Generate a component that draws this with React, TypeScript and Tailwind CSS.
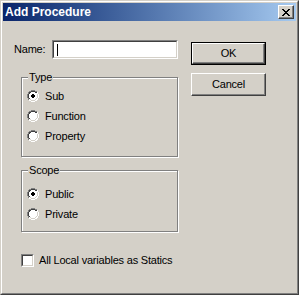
import React from "react";

function Radio({ checked }: { checked?: boolean }) {
  return (
    <svg width="12" height="12" viewBox="0 0 12 12" className="shrink-0">
      <path d="M4 0h4v1h2v1h1v2h1v4h-1v2h-1v1h-2v1h-4v-1h-2v-1h-1v-2h-1v-4h1v-2h1v-1h2z" fill="#fff" />
      <path d="M4 0h4v1h-4zM2 1h2v1h-2zM8 1h2v1h-2zM1 2h1v2h-1zM0 4h1v4h-1zM1 8h1v2h-1z" fill="#808080" />
      <path d="M4 1h4v1h-4zM2 2h2v1h-2zM8 2h2v1h-2zM1 4h1v4h-1zM2 3h1v1h-1zM2 8h1v1h-1z" fill="#404040" />
      <path d="M10 2h1v2h-1zM11 4h1v4h-1zM10 8h1v2h-1zM8 10h2v1h-2zM2 10h2v1h-2zM4 11h4v1h-4z" fill="#ffffff" />
      <path d="M10 4h1v4h-1zM9 8h1v1h-1zM8 9h1v1h-1zM4 10h4v1h-4zM3 9h1v1h-1z" fill="#d4d0c8" />
      {checked && <path d="M5 4h2v1h1v2h-1v1h-2v-1h-1v-2h1z" fill="#000" />}
    </svg>
  );
}

function GroupBox({
  label,
  className,
  children,
}: {
  label: string;
  className: string;
  children: React.ReactNode;
}) {
  return (
    <div
      className={`relative border border-[#808080] shadow-[1px_1px_0_#fff,inset_1px_1px_0_#fff] ${className}`}
    >
      <span className="absolute -top-[8px] left-[6px] bg-[#d4d0c8] px-[1px] leading-[14px]">
        {label}
      </span>
      {children}
    </div>
  );
}

function RadioRow({ label, checked }: { label: string; checked?: boolean }) {
  return (
    <div className="flex h-[20px] items-center gap-[6px] whitespace-nowrap">
      <Radio checked={checked} />
      <span>{label}</span>
    </div>
  );
}

function Button({ children, isDefault }: { children: React.ReactNode; isDefault?: boolean }) {
  const inner = (
    <div
      className={`flex items-center justify-center border border-t-white border-l-white border-b-[#404040] border-r-[#404040] shadow-[inset_-1px_-1px_0_#808080] ${
        isDefault ? "h-[21px] w-[73px]" : "h-[23px] w-[75px]"
      }`}
    >
      {children}
    </div>
  );
  if (isDefault) {
    return <div className="border border-black">{inner}</div>;
  }
  return inner;
}

export default function App() {
  return (
    <div className="h-[295px] w-[299px] border border-t-[#d4d0c8] border-l-[#d4d0c8] border-b-[#404040] border-r-[#404040] bg-[#d4d0c8] font-['Liberation_Sans',Arial,sans-serif] text-[11px] tracking-[-0.2px] text-black">
      <div className="flex h-full flex-col border border-t-white border-l-white border-b-[#808080] border-r-[#808080] p-px">
        {/* Title bar */}
        <div className="flex h-[18px] shrink-0 items-center justify-between bg-gradient-to-r from-[#0a246a] to-[#a6caf0] pl-[2px] pr-[2px]">
          <span className="text-[12px] font-bold leading-none tracking-normal text-white">Add Procedure</span>
          <div className="flex h-[14px] w-[16px] items-center justify-center border border-t-white border-l-white border-b-[#404040] border-r-[#404040] bg-[#d4d0c8] shadow-[inset_-1px_-1px_0_#808080]">
            <svg width="8" height="7" viewBox="0 0 8 7">
              <path d="M0 0h2v1h1v1h2v-1h1v-1h2v1h-1v1h-1v1h-1v1h1v1h1v1h1v1h-2v-1h-1v-1h-2v1h-1v1h-2v-1h1v-1h1v-1h1v-1h-1v-1h-1v-1h-1z" fill="#000" />
            </svg>
          </div>
        </div>

        {/* Body */}
        <div className="flex flex-1 gap-[13px] pl-[11px] pt-[19px]">
          <div className="flex w-[164px] shrink-0 flex-col">
            <div className="flex h-[19px] items-center">
              <span className="w-[38px]">Name:</span>
              <div className="relative h-[19px] w-[126px] border border-t-[#808080] border-l-[#808080] border-b-white border-r-white">
                <div className="flex h-full items-center border border-t-[#404040] border-l-[#404040] border-b-[#d4d0c8] border-r-[#d4d0c8] bg-white pl-[3px]">
                  <span className="block h-[12px] w-px bg-black" />
                </div>
              </div>
            </div>

            <GroupBox label="Type" className="ml-[7px] mt-[18px] h-[80px] w-[157px] pl-[5px] pt-[8px]">
              <RadioRow label="Sub" checked />
              <RadioRow label="Function" />
              <RadioRow label="Property" />
            </GroupBox>

            <GroupBox label="Scope" className="ml-[7px] mt-[13px] h-[62px] w-[157px] pl-[5px] pt-[13px]">
              <RadioRow label="Public" checked />
              <RadioRow label="Private" />
            </GroupBox>

            <div className="ml-[7px] mt-[22px] flex h-[13px] items-center gap-[5px] whitespace-nowrap">
              <div className="h-[13px] w-[13px] shrink-0 border border-t-[#808080] border-l-[#808080] border-b-white border-r-white">
                <div className="h-full w-full border border-t-[#404040] border-l-[#404040] border-b-[#d4d0c8] border-r-[#d4d0c8] bg-white" />
              </div>
              <span>All Local variables as Statics</span>
            </div>
          </div>

          <div className="flex flex-col gap-[8px] pt-[2px]">
            <Button isDefault>OK</Button>
            <Button>Cancel</Button>
          </div>
        </div>
      </div>
    </div>
  );
}
